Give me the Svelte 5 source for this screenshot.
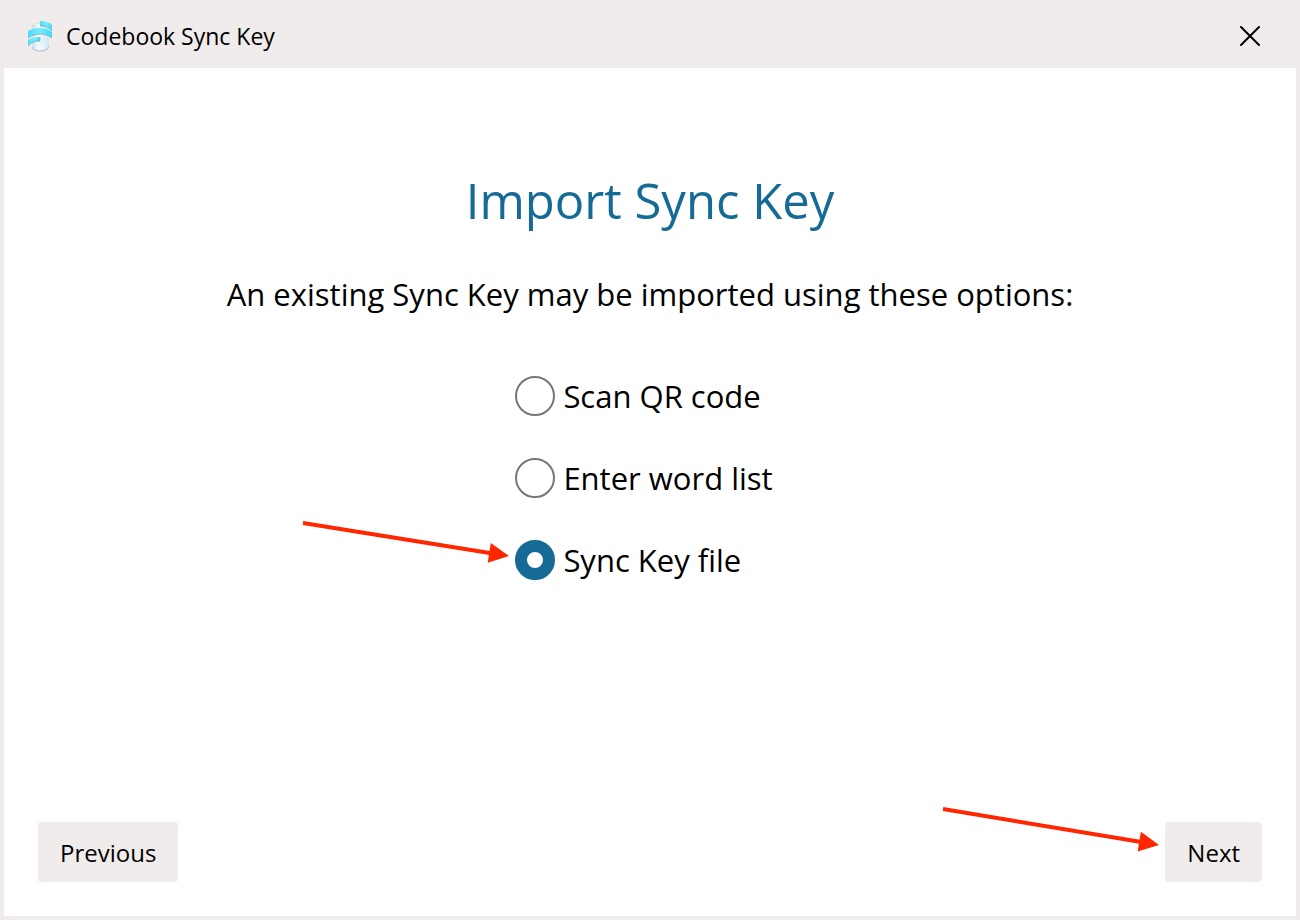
<script lang="ts">
  const options = [
    { value: 'qr', label: 'Scan QR code' },
    { value: 'words', label: 'Enter word list' },
    { value: 'file', label: 'Sync Key file' }
  ];

  let selected = $state('file');
</script>

<!-- Callout arrow, from the top left corner down to its tip -->
{#snippet arrow(dx: number, dy: number)}
  {@const length = Math.hypot(dx, dy)}
  {@const angle = (Math.atan2(dy, dx) * 180) / Math.PI}
  <svg class="arrow" width={dx} height={dy} aria-hidden="true">
    <g transform="rotate({angle})">
      <path d="M0 0H{length - 18}" stroke="#ff2600" stroke-width="4" />
      <path d="M{length} 0l-20 -10v20z" fill="#ff2600" />
    </g>
  </svg>
{/snippet}

<div class="window">
  <header class="titlebar">
    <svg class="logo" width="26" height="32" viewBox="0 0 26 32" aria-hidden="true">
      <defs>
        <linearGradient id="body" x1="0" x2="1">
          <stop offset="0" stop-color="#c9dfec" />
          <stop offset="0.4" stop-color="#f4fbff" />
          <stop offset="1" stop-color="#d3e5f0" />
        </linearGradient>
        <linearGradient id="ribbon" x1="0" x2="1">
          <stop offset="0" stop-color="#4bdcf8" />
          <stop offset="0.5" stop-color="#7be9fc" />
          <stop offset="1" stop-color="#42d8f7" />
        </linearGradient>
      </defs>
      <path d="M5 7Q6 3 13 3Q20 3 22 7V28Q20 31 13 31Q6 31 5 28z" fill="url(#body)" />
      <path d="M5 27Q6 31 13 31Q20 31 22 27" fill="none" stroke="#b3bcc4" />
      <path d="M5 8Q6 3 13 3" fill="none" stroke="#c5ced6" stroke-width="0.6" />
      <path d="M13 1Q21 1 25 5V11Q21 6 13 6z" fill="url(#ribbon)" />
      <path d="M1 11Q6 8 13 8Q20 8 25 12V18Q20 14 13 14Q6 14 1 18z" fill="url(#ribbon)" />
      <path d="M1 20Q6 17 13 17V21Q5 21 1 26z" fill="url(#ribbon)" />
      <path d="M13 6Q21 6 25 11M1 18Q6 14 13 14Q20 14 25 18M1 26Q5 21 13 21V17" fill="none" stroke="#5d9fae" stroke-width="0.6" />
    </svg>
    <span class="caption">Codebook Sync Key</span>
    <button class="close" type="button" aria-label="Close">
      <svg width="20" height="20" viewBox="0 0 20 20" aria-hidden="true">
        <path d="M1 1L19 19M19 1L1 19" stroke="#000" stroke-width="2" stroke-linecap="round" />
      </svg>
    </button>
  </header>

  <main class="page">
    <h1>Import Sync Key</h1>
    <p id="intro">An existing Sync Key may be imported using these options:</p>

    <div class="options" role="radiogroup" aria-labelledby="intro">
      {#each options as option}
        <label class="option">
          {#if option.value === 'file'}
            {@render arrow(206, 33)}
          {/if}
          <input type="radio" name="method" value={option.value} bind:group={selected} />
          {option.label}
        </label>
      {/each}
    </div>

    <footer class="actions">
      <button class="action" type="button">Previous</button>
      <div class="next">
        {@render arrow(216, 36)}
        <button class="action" type="button">Next</button>
      </div>
    </footer>
  </main>
</div>

<style>
  :global(body) {
    margin: 0;
  }
  .window {
    box-sizing: border-box;
    min-height: 100vh;
    display: flex;
    flex-direction: column;
    padding: 0 4px 4px;
    background: #f0eceb;
    color: #000;
    font-family: "Segoe UI", "Open Sans", "Noto Sans", sans-serif;
  }
  .titlebar {
    display: flex;
    align-items: center;
    height: 68px;
    padding: 4px 22px 0 23px;
    box-sizing: border-box;
  }
  .caption {
    margin-left: 13px;
    font-size: 23px;
    line-height: 32px;
  }
  .close {
    display: flex;
    margin-left: auto;
    padding: 14px;
    border: 0;
    background: none;
  }
  .page {
    flex: 1;
    display: flex;
    flex-direction: column;
    align-items: center;
    padding: 96px 34px 34px;
    background: #fff;
  }
  h1 {
    margin: 0;
    color: #156a96;
    font-size: 49px;
    font-weight: 400;
    line-height: 72px;
  }
  p {
    margin: 36px 0 0;
    font-size: 31px;
    line-height: 44px;
    text-align: center;
  }
  .options {
    display: flex;
    flex-direction: column;
    gap: 38px;
    margin: 58px 0 40px;
    padding-right: 12px;
  }
  .option {
    position: relative;
    display: flex;
    align-items: center;
    gap: 8px;
    font-size: 31px;
    line-height: 44px;
  }
  .option input {
    appearance: none;
    box-sizing: border-box;
    width: 40px;
    height: 40px;
    margin: 0;
    border: 2px solid #777;
    border-radius: 50%;
    background: #fff;
  }
  .option input:checked {
    border: 12px solid #156a96;
  }
  .actions {
    align-self: stretch;
    display: flex;
    justify-content: space-between;
    margin-top: auto;
  }
  .action {
    height: 60px;
    padding: 0 22px;
    border: 0;
    border-radius: 4px;
    background: #f0eceb;
    color: #000;
    font-family: inherit;
    font-size: 24px;
  }
  .next {
    position: relative;
  }
  .arrow {
    position: absolute;
    right: 100%;
    bottom: 50%;
    margin: 0 6px 4px 0;
    overflow: visible;
    pointer-events: none;
  }
  .next .arrow {
    margin-bottom: 7px;
  }
</style>
